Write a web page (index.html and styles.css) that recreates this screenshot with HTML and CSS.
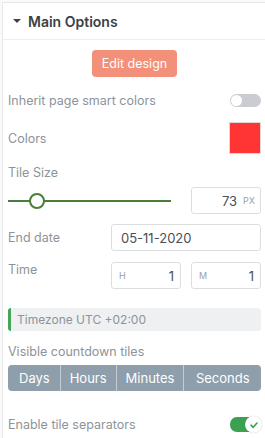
FILE: index.html
```html
<!DOCTYPE html>
<html lang="en">
<head>
    <meta charset="UTF-8">
    <meta name="viewport" content="width=device-width, initial-scale=1.0">
    <title>Main Options</title>
    <link rel="stylesheet" href="styles.css">
</head>
<body>
    <div class="panel">
        <div class="panel-header">
            <span class="caret"></span>
            <span class="panel-title">Main Options</span>
        </div>
        <div class="panel-body">
            <div class="center-row">
                <button class="edit-btn">Edit design</button>
            </div>

            <div class="row row-inherit">
                <span class="label">Inherit page smart colors</span>
                <span class="toggle"><span class="knob"></span></span>
            </div>

            <div class="row row-colors">
                <span class="label">Colors</span>
                <span class="swatch"></span>
            </div>

            <div class="label label-block">Tile Size</div>
            <div class="row row-size">
                <div class="slider">
                    <div class="track"></div>
                    <div class="thumb"></div>
                </div>
                <div class="field field-small">
                    <span class="field-value">73</span>
                    <span class="unit">PX</span>
                </div>
            </div>

            <div class="row row-date">
                <span class="label">End date</span>
                <div class="field field-wide">05-11-2020</div>
            </div>

            <div class="row row-time">
                <span class="label">Time</span>
                <div class="time-fields">
                    <div class="field field-small">
                        <span class="unit">H</span>
                        <span class="field-value">1</span>
                    </div>
                    <div class="field field-small">
                        <span class="unit">M</span>
                        <span class="field-value">1</span>
                    </div>
                </div>
            </div>

            <div class="notice">Timezone UTC +02:00</div>

            <div class="label label-block">Visible countdown tiles</div>
            <div class="segments">
                <span class="segment">Days</span>
                <span class="segment">Hours</span>
                <span class="segment">Minutes</span>
                <span class="segment">Seconds</span>
            </div>

            <div class="row row-separators">
                <span class="label">Enable tile separators</span>
                <span class="toggle toggle-on">
                    <span class="knob">
                        <svg width="10" height="10" viewBox="0 0 10 10"><path d="M2 5.2 L4.2 7.3 L8 3" fill="none" stroke="#3aa150" stroke-width="1.6" stroke-linecap="round" stroke-linejoin="round"/></svg>
                    </span>
                </span>
            </div>
        </div>
    </div>
</body>
</html>
```

FILE: styles.css
```css
body {
    margin: 0;
    padding: 2px 0 0 2px;
    background-color: #fafafa;
    font-family: Inter, 'Noto Sans', sans-serif;
    color: #8d9399;
}
.panel {
    background-color: white;
    border-top: 1px solid #e6e8ea;
    border-left: 1px solid #e6e8ea;
    height: 440px;
}
.panel-header {
    display: flex;
    align-items: center;
    height: 36px;
    padding-left: 10px;
    border-bottom: 1px solid #eceef0;
}
.caret {
    width: 0;
    height: 0;
    border-left: 4px solid transparent;
    border-right: 4px solid transparent;
    border-top: 4px solid #3c4146;
    margin-right: 7px;
}
.panel-title {
    font-size: 14px;
    font-weight: 600;
    color: #3c4146;
}
.panel-body {
    padding: 10px 4px 0 5px;
}
.center-row {
    display: flex;
    justify-content: center;
}
.edit-btn {
    background-color: #f29079;
    color: white;
    border: none;
    border-radius: 4px;
    font-family: inherit;
    font-size: 12.5px;
    height: 27px;
    padding: 0 10px;
}
.row {
    display: flex;
    align-items: center;
    justify-content: space-between;
}
.label {
    font-size: 12.5px;
}
.label-block {
    line-height: 16px;
}
.row-inherit {
    margin-top: 15px;
    height: 16px;
}
.toggle {
    display: flex;
    align-items: center;
    width: 31px;
    height: 13px;
    border-radius: 7px;
    background-color: #c9ccd0;
    position: relative;
}
.toggle .knob {
    position: absolute;
    left: 1px;
    top: 1px;
    width: 11px;
    height: 11px;
    border-radius: 50%;
    background-color: white;
}
.toggle-on {
    height: 15px;
    background-color: #3aa150;
}
.toggle-on .knob {
    left: auto;
    right: -1px;
    top: -1px;
    width: 17px;
    height: 17px;
    display: flex;
    align-items: center;
    justify-content: center;
    box-shadow: 0 0 1px rgba(0,0,0,0.3);
}
.row-colors {
    margin-top: 14px;
}
.swatch {
    width: 32px;
    height: 32px;
    background-color: #ff3535;
    border: 1px solid #e4d6d6;
    box-sizing: border-box;
}
.row-colors + .label-block {
    margin-top: 11px;
}
.row-size {
    margin-top: 6px;
}
.slider {
    position: relative;
    width: 163px;
    height: 16px;
    display: flex;
    align-items: center;
}
.track {
    width: 100%;
    height: 2px;
    background-color: #4b7d3a;
}
.thumb {
    position: absolute;
    left: 21px;
    top: 0;
    width: 12px;
    height: 12px;
    border: 2px solid #4b7d3a;
    border-radius: 50%;
    background-color: white;
}
.field {
    display: flex;
    align-items: center;
    justify-content: space-between;
    box-sizing: border-box;
    height: 27px;
    border: 1px solid #dcdfe2;
    border-radius: 3px;
    background-color: white;
    color: #4a4f54;
    font-size: 13px;
}
.field-small {
    width: 70px;
    padding: 0 6px 0 7px;
}
.row-size .field-small {
    justify-content: flex-end;
    gap: 6px;
    padding-right: 5px;
}
.unit {
    font-size: 9px;
    color: #9a9fa4;
}
.field-wide {
    width: 150px;
    padding-left: 9px;
}
.row-date {
    margin-top: 10px;
}
.row-time {
    margin-top: 11px;
    align-items: flex-start;
}
.time-fields {
    display: flex;
    gap: 10px;
}
.notice {
    margin-top: 19px;
    height: 23px;
    line-height: 23px;
    background-color: #eef0f2;
    border-left: 3px solid #46a556;
    border-radius: 3px;
    padding-left: 6px;
    font-size: 12px;
    color: #8d9399;
}
.notice + .label-block {
    margin-top: 13px;
}
.segments {
    display: flex;
    margin-top: 5px;
    height: 26px;
    background-color: #8e9eab;
    border-radius: 4px;
    overflow: hidden;
}
.segment {
    display: flex;
    align-items: center;
    justify-content: center;
    color: white;
    font-size: 13px;
    border-left: 1px solid #c3ccd4;
    padding: 0 9px;
}
.segment:first-child {
    border-left: none;
    padding: 0 10px 0 11px;
}
.segment:last-child {
    flex: 1;
}
.row-separators {
    margin-top: 26px;
}
```
